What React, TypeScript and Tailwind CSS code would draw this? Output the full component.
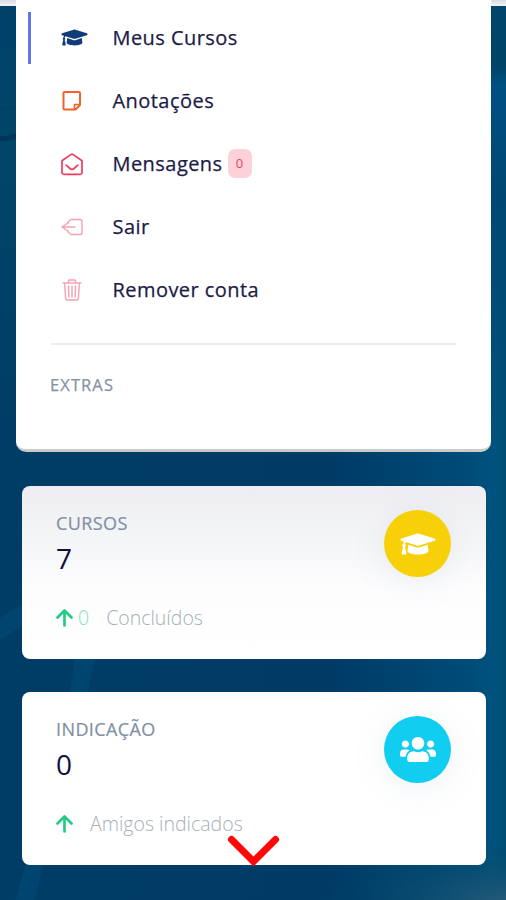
import type { ReactNode } from "react";
import { FaGraduationCap, FaUsers } from "react-icons/fa";

const NoteIcon = () => (
  <svg width="20" height="22" viewBox="0 0 20 22" fill="none" stroke="#f4622c" strokeWidth="2" strokeLinejoin="round">
    <path d="M2.500 2h14.500a1 1 0 0 1 1 1v12l-4.500 4.500h-11a1 1 0 0 1-1-1V3a1 1 0 0 1 1-1z" />
    <path d="M12.500 19v-4.500h5" strokeWidth="1.700" />
  </svg>
);

const MailIcon = () => (
  <svg width="22" height="24" viewBox="0 0 22 24" fill="none" stroke="#ef3b60" strokeWidth="1.700" strokeLinejoin="round" strokeLinecap="round">
    <path d="M1 8.800 9.800 2.600a2 2 0 0 1 2.400 0L21 8.800V20.500a1.800 1.800 0 0 1-1.800 1.800H2.800A1.800 1.800 0 0 1 1 20.500z" />
    <path d="M5.200 13.200 9 16.500a3 3 0 0 0 4 0l3.800-3.300" />
  </svg>
);

const ExitIcon = () => (
  <svg width="22" height="18" viewBox="0 0 22 18" fill="none" stroke="#f4a3b1" strokeWidth="1.400" strokeLinejoin="round" strokeLinecap="round">
    <path d="M7 5V4l3-2.500h9a2 2 0 0 1 2 2v11a2 2 0 0 1-2 2h-9L7 14v-1" />
    <path d="M14 9H1m6-4L1 9l6 4" />
  </svg>
);

const TrashIcon = () => (
  <svg width="20" height="22" viewBox="0 0 20 22" fill="none" stroke="#f4a3b1" strokeWidth="1.400" strokeLinejoin="round" strokeLinecap="round">
    <path d="M1 4h18M6.500 4V1.800a.8.8 0 0 1 .8-.8h5.400a.8.8 0 0 1 .8.8V4M2.600 4l1 15.400A1.700 1.700 0 0 0 5.300 21h9.400a1.700 1.700 0 0 0 1.700-1.600l1-15.400" />
    <path d="m6.500 7 .4 11M10 7v11m3.500-11-.4 11" />
  </svg>
);

const MENU = [
  { label: "Meus Cursos", icon: <FaGraduationCap className="h-[21px] w-[27px] text-[#123c78]" />, active: true },
  { label: "Anotações", icon: <NoteIcon /> },
  { label: "Mensagens", icon: <MailIcon />, badge: "0" },
  { label: "Sair", icon: <ExitIcon /> },
  { label: "Remover conta", icon: <TrashIcon /> },
];

type StatCardProps = {
  title: string;
  value: string;
  className: string;
  icon: ReactNode;
  iconClass: string;
  children: ReactNode;
};

function StatCard({ title, value, className, icon, iconClass, children }: StatCardProps) {
  return (
    <section className={`h-[173px] w-[464px] rounded-[8px] pl-[34px] pr-[35px] pt-[23px] ${className}`}>
      <div className="flex justify-between">
        <div>
          <h2 className="h-[28px] text-[18px] leading-[28px] tracking-[0.4px] text-[#8090a4] [-webkit-text-stroke:0.2px_#8090a4]">{title}</h2>
          <p className="text-[28px] leading-[42px] text-[#10103f]">{value}</p>
        </div>
        <div className={`mt-px flex size-[67px] items-center justify-center rounded-full text-white shadow-[0_4px_32px_rgba(136,152,170,0.15)] ${iconClass}`}>
          {icon}
        </div>
      </div>
      <div className="mt-[25px] flex h-[28px] items-center text-[19.500px] font-light text-[#a7b0b7]">
        <svg width="17" height="18" viewBox="0 0 17 18" fill="none" stroke="#24cb86" strokeWidth="2.700" strokeLinecap="round" strokeLinejoin="round">
          <path d="M8.500 16.500v-15M1.500 8.500l7-7 7 7" />
        </svg>
        {children}
      </div>
    </section>
  );
}

export default function App() {
  return (
    <div className="relative h-[900px] w-[506px] overflow-hidden bg-[linear-gradient(90deg,#003d66_0%,#003b66_65%,#004b78_92%,#00527e_98%,#004c75_100%)] font-['Open_Sans',sans-serif]">
      <svg className="absolute inset-0" width="506" height="900" viewBox="0 0 506 900" fill="none">
        <defs>
          <linearGradient id="side" x1="0" y1="0" x2="0" y2="1">
            <stop offset="0" stopColor="#00466d" />
            <stop offset=".15" stopColor="#004466" />
            <stop offset=".2" stopColor="#004f83" />
            <stop offset=".45" stopColor="#004873" />
            <stop offset="1" stopColor="#004873" stopOpacity="0" />
          </linearGradient>
          <linearGradient id="left" x1="0" y1="0" x2="0" y2="1">
            <stop offset="0" stopColor="#004069" />
            <stop offset=".35" stopColor="#004668" />
            <stop offset="1" stopColor="#003d66" />
          </linearGradient>
          <radialGradient id="corner">
            <stop stopColor="#245978" />
            <stop offset="1" stopColor="#004562" stopOpacity="0" />
          </radialGradient>
        </defs>
        <rect width="17" height="430" fill="url(#left)" />
        <rect x="491" width="15" height="430" fill="url(#side)" />
        <path d="M0 107q9 2 17-1v3q-8 3-17 1z" fill="#003c5e" opacity=".3" />
        <path d="M0 136q9 1 17-3v5q-8 4-17 3z" fill="#00365b" />
        <path d="m0 618 22-14v22L0 640z" fill="#004b72" opacity=".6" />
        <path d="M75 659h20l-7 33H70zM25 865h18l-8 35H16z" fill="#00456f" />
        <ellipse cx="506" cy="900" rx="180" ry="60" fill="url(#corner)" />
      </svg>
      <div className="absolute inset-x-0 top-0 h-[6px] bg-gradient-to-b from-[#d8dce2] to-[#f3f3f5]" />

      <main className="relative flex flex-col">
        <nav className="ml-[16px] h-[452px] w-[475px] rounded-b-[10px] border-b-[3px] border-[#c9ccca] bg-white pt-[6px]">
          <ul>
            {MENU.map((item) => (
              <li key={item.label} className="flex h-[63px] items-center pl-[12px]">
                <span className={item.active ? "h-[52px] w-[2.500px] bg-[#6575e8]" : "h-[52px] w-[2.500px]"} />
                <span className="ml-[27.500px] flex w-[28px] justify-center">
                  <span className={item.active ? "ml-[4px]" : "-ml-px"}>{item.icon}</span>
                </span>
                <span className="ml-[26.500px] text-[20px] tracking-[0.45px] text-[#1b1b47] [-webkit-text-stroke:0.25px_#1b1b47]">{item.label}</span>
                {item.badge && (
                  <span className="ml-[5px] flex h-[29px] w-[24px] items-center justify-center rounded-[7px] bg-[#fdd1da] text-[13px] font-medium text-[#ef4263]">
                    {item.badge}
                  </span>
                )}
              </li>
            ))}
          </ul>
          <hr className="ml-[35px] mt-[22px] w-[405px] border-t-2 border-[#ececef]" />
          <h3 className="ml-[34px] mt-[27px] text-[16.500px] leading-[26px] tracking-[1.1px] text-[#8493a5] [-webkit-text-stroke:0.25px_#8493a5]">EXTRAS</h3>
        </nav>

        <div className="ml-[22px] mt-[34px] flex flex-col gap-[33px]">
          <StatCard
            title="CURSOS"
            value="7"
            className="bg-[linear-gradient(180deg,#eeeef2_0%,#f4f5f7_30%,#fdfdfe_60%,#fff_100%)]"
            icon={<FaGraduationCap className="h-[28px] w-[36px]" />}
            iconClass="bg-[#f8d00a]"
          >
            <span className="ml-[5px] text-[#8bddb7]">0</span>
            <span className="ml-[17px]">Concluídos</span>
          </StatCard>
          <StatCard
            title="INDICAÇÃO"
            value="0"
            className="bg-white"
            icon={<FaUsers className="h-[29px] w-[36px]" />}
            iconClass="bg-[#11cdef]"
          >
            <span className="ml-[17px]">Amigos indicados</span>
          </StatCard>
        </div>
      </main>

      <svg className="absolute left-[227px] top-[835px]" width="53" height="33" viewBox="0 0 53 33" fill="none" stroke="#ff0808" strokeWidth="7" strokeLinecap="round">
        <path d="m4.500 4.500 22 22 22-22" />
      </svg>
    </div>
  );
}
